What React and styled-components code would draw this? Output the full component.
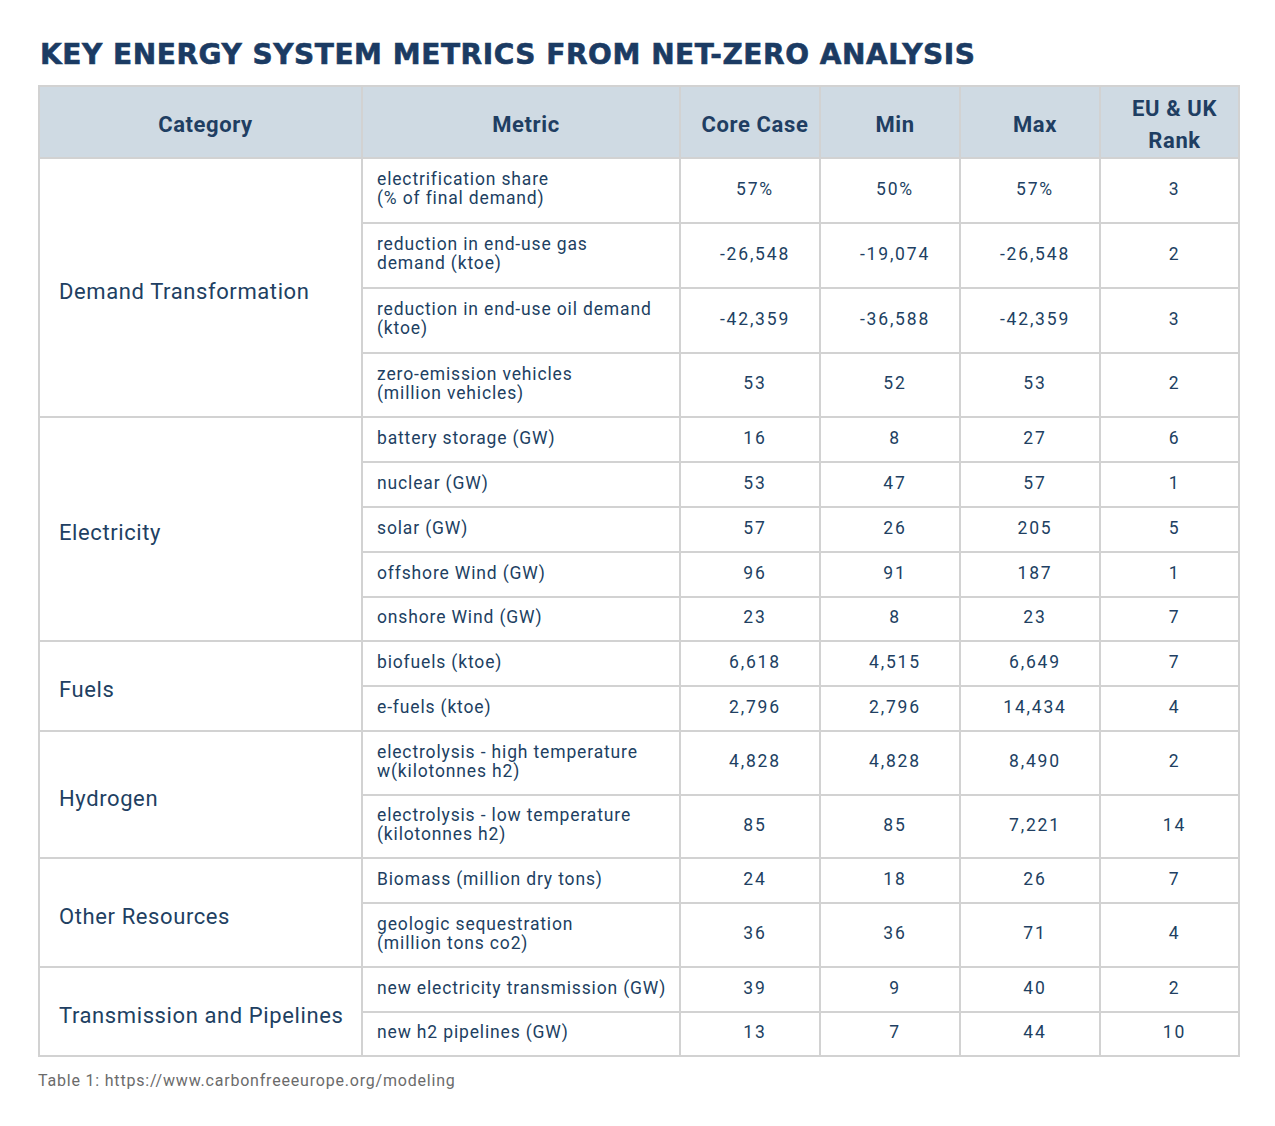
import React from "react";
import styled, { createGlobalStyle } from "styled-components";

const GlobalStyle = createGlobalStyle`
  body {
    margin: 0;
    background: #ffffff;
    font-family: Roboto, "Liberation Sans", sans-serif;
  }
`;

const Page = styled.div`
  padding: 38px 37px 40px 38px;
  width: 1200px;
`;

const Title = styled.h1`
  margin: 0 0 13px 2px;
  font-family: "DejaVu Sans", sans-serif;
  font-weight: 900;
  font-size: 28px;
  line-height: 34px;
  color: #1b3b63;
  letter-spacing: 0.55px;
  -webkit-text-stroke: 0.6px #1b3b63;
`;

const Table = styled.table`
  width: 1200px;
  border-collapse: collapse;
  table-layout: fixed;
  color: #213f62;
  border: 2px solid #d2d2d2;
`;

const HeadCell = styled.th`
  background: #cfdae3;
  border: 2px solid #d2d2d2;
  font-weight: 700;
  font-size: 22px;
  line-height: 32px;
  letter-spacing: 0.6px;
  color: #1f3e62;
  text-align: center;
  padding: 5px 0 0 10px;
  height: 65px;
`;

const CategoryCell = styled.td`
  border: 2px solid #d2d2d2;
  font-size: 22px;
  padding: 7px 0 0 19px;
  letter-spacing: 0.6px;
  vertical-align: middle;
`;

const MetricCell = styled.td`
  border: 2px solid #d2d2d2;
  font-size: 17.5px;
  line-height: 19px;
  letter-spacing: 0.85px;
  padding: 0 8px 3px 14px;
  vertical-align: middle;
`;

const NumCell = styled.td`
  border: 2px solid #d2d2d2;
  font-size: 17.5px;
  letter-spacing: 1.8px;
  text-align: center;
  padding: 0 0 4px 10px;
  vertical-align: middle;
`;

const Row = styled.tr`
  height: ${(p) => p.$h}px;
`;

const Caption = styled.p`
  margin: 14px 0 0 0;
  font-size: 16px;
  color: #6b6b6b;
  letter-spacing: 0.8px;
`;

const groups = [
  {
    name: "Demand Transformation",
    rows: [
      [["electrification share", "(% of final demand)"], "57%", "50%", "57%", "3", 65],
      [["reduction in end-use gas", "demand (ktoe)"], "-26,548", "-19,074", "-26,548", "2", 65],
      [["reduction in end-use oil demand", "(ktoe)"], "-42,359", "-36,588", "-42,359", "3", 65],
      [["zero-emission vehicles", "(million vehicles)"], "53", "52", "53", "2", 64],
    ],
  },
  {
    name: "Electricity",
    rows: [
      [["battery storage (GW)"], "16", "8", "27", "6", 45],
      [["nuclear (GW)"], "53", "47", "57", "1", 45],
      [["solar (GW)"], "57", "26", "205", "5", 45],
      [["offshore Wind (GW)"], "96", "91", "187", "1", 45],
      [["onshore Wind (GW)"], "23", "8", "23", "7", 44],
    ],
  },
  {
    name: "Fuels",
    rows: [
      [["biofuels (ktoe)"], "6,618", "4,515", "6,649", "7", 45],
      [["e-fuels (ktoe)"], "2,796", "2,796", "14,434", "4", 45],
    ],
  },
  {
    name: "Hydrogen",
    rows: [
      [["electrolysis - high temperature", "w(kilotonnes h2)"], "4,828", "4,828", "8,490", "2", 64],
      [["electrolysis - low temperature", "(kilotonnes h2)"], "85", "85", "7,221", "14", 63],
    ],
  },
  {
    name: "Other Resources",
    rows: [
      [["Biomass (million dry tons)"], "24", "18", "26", "7", 45],
      [["geologic sequestration", "(million tons co2)"], "36", "36", "71", "4", 64],
    ],
  },
  {
    name: "Transmission and Pipelines",
    rows: [
      [["new electricity transmission (GW)"], "39", "9", "40", "2", 45],
      [["new h2 pipelines (GW)"], "13", "7", "44", "10", 44],
    ],
  },
];

const App = () => {
  return (
    <>
      <GlobalStyle />
      <Page>
        <Title>KEY ENERGY SYSTEM METRICS FROM NET-ZERO ANALYSIS</Title>
        <Table>
          <colgroup>
            <col style={{ width: 323 }} />
            <col style={{ width: 318 }} />
            <col style={{ width: 140 }} />
            <col style={{ width: 140 }} />
            <col style={{ width: 140 }} />
            <col style={{ width: 139 }} />
          </colgroup>
          <thead>
            <tr>
              <HeadCell>Category</HeadCell>
              <HeadCell>Metric</HeadCell>
              <HeadCell>Core Case</HeadCell>
              <HeadCell>Min</HeadCell>
              <HeadCell>Max</HeadCell>
              <HeadCell>
                EU &amp; UK
                <br />
                Rank
              </HeadCell>
            </tr>
          </thead>
          <tbody>
            {groups.map((g) =>
              g.rows.map((r, i) => (
                <Row key={g.name + i} $h={r[5]}>
                  {i === 0 && (
                    <CategoryCell rowSpan={g.rows.length}>{g.name}</CategoryCell>
                  )}
                  <MetricCell>
                    {r[0].map((line, j) => (
                      <div key={j}>{line}</div>
                    ))}
                  </MetricCell>
                  <NumCell>{r[1]}</NumCell>
                  <NumCell>{r[2]}</NumCell>
                  <NumCell>{r[3]}</NumCell>
                  <NumCell>{r[4]}</NumCell>
                </Row>
              ))
            )}
          </tbody>
        </Table>
        <Caption>Table 1: https://www.carbonfreeeurope.org/modeling</Caption>
      </Page>
    </>
  );
};

export default App;
